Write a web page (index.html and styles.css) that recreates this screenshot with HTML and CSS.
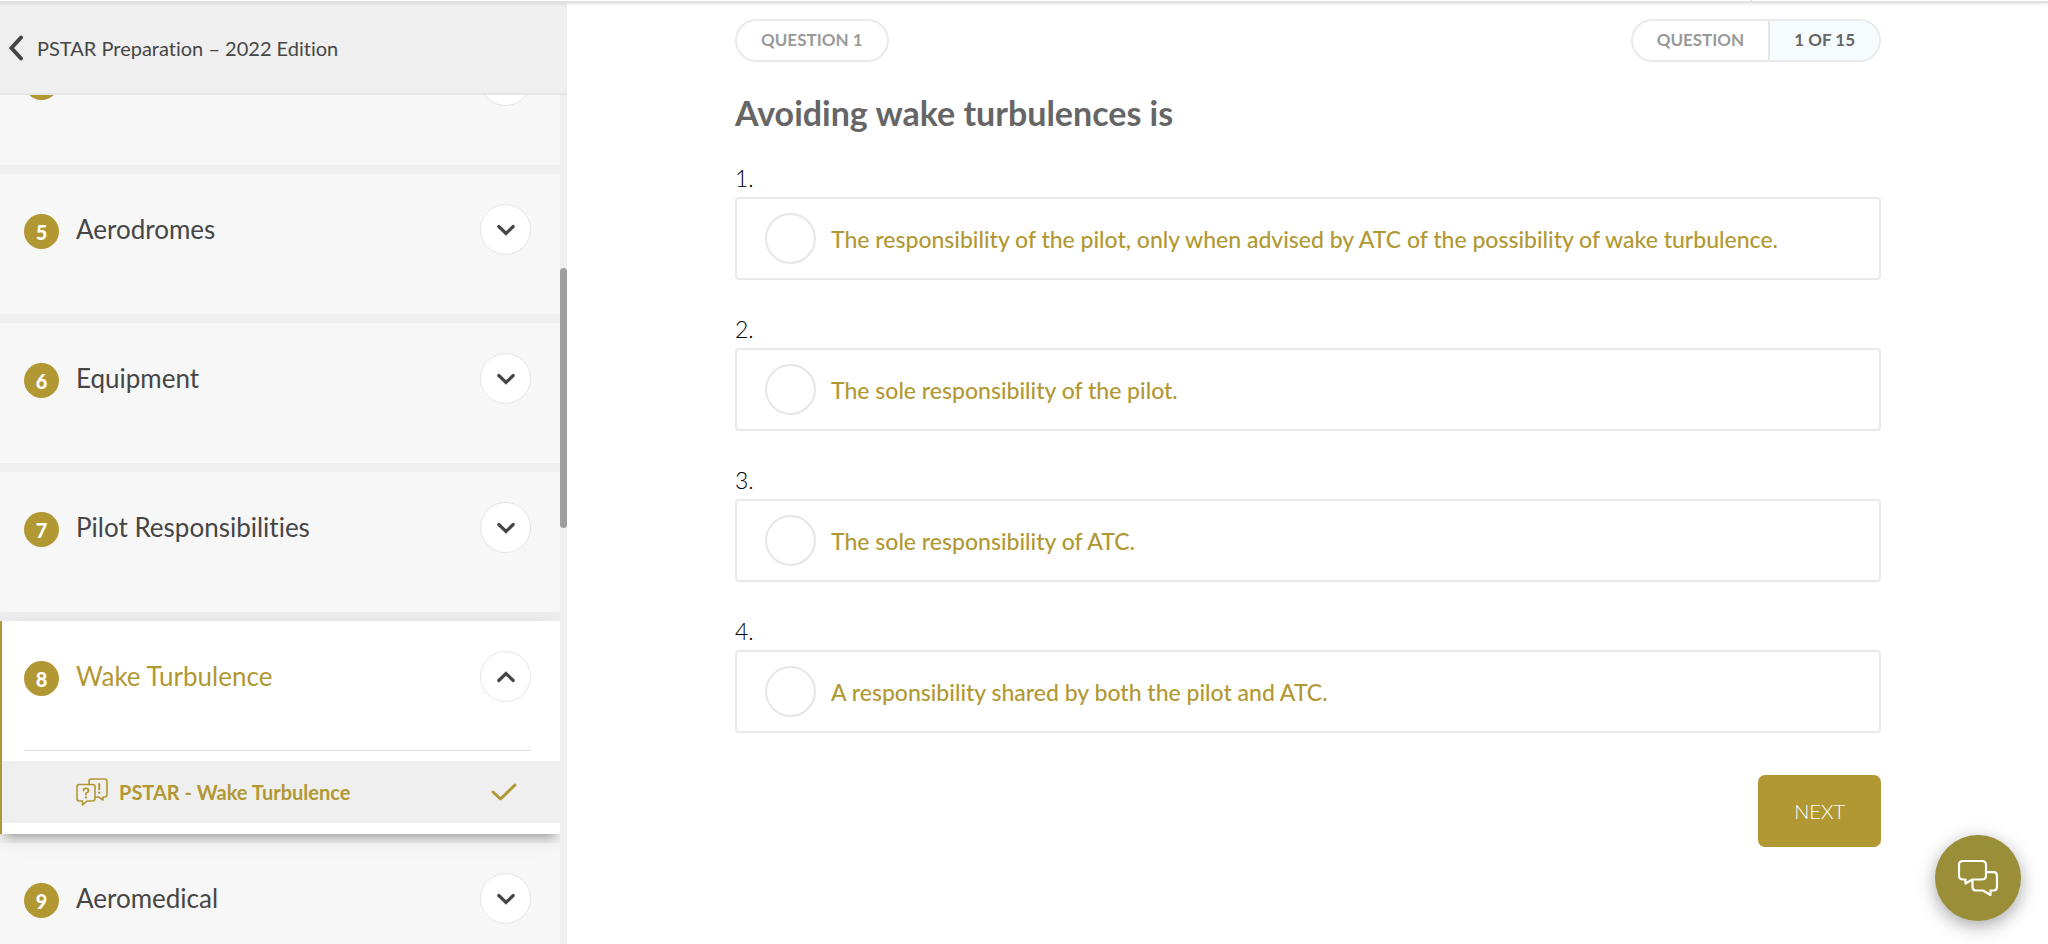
FILE: index.html
```html
<!DOCTYPE html>
<html lang="en">
<head>
<meta charset="utf-8">
<meta name="viewport" content="width=device-width, initial-scale=1">
<title>PSTAR Preparation – 2022 Edition</title>
<link rel="stylesheet" href="styles.css">
</head>
<body>
<svg class="sprite" aria-hidden="true">
  <symbol id="chevron" viewBox="0 0 20 14"><path d="M2.800 3.500 10 10.500 17.200 3.500" fill="none" stroke="currentColor" stroke-width="3.200" stroke-linecap="round"/></symbol>
</svg>
<header class="topbar"><span class="topbar-divider"></span></header>
<div class="layout">
  <aside class="sidebar">
    <a class="course" href="#">
      <svg class="course-back" viewBox="0 0 14 26" aria-hidden="true"><path d="M12 2.500 2.500 13 12 23.500" fill="none" stroke="currentColor" stroke-width="4" stroke-linecap="round"/></svg>
      <span>PSTAR Preparation – 2022 Edition</span>
    </a>
    <div class="viewport">
      <ul class="sections">
        <li class="section"><div class="section-head"><span class="badge"></span><span class="section-title"></span><button class="toggle" type="button" aria-label="Expand section 4"><svg class="chevron"><use href="#chevron"/></svg></button></div></li>
        <li class="section"><div class="section-head"><span class="badge">5</span><span class="section-title">Aerodromes</span><button class="toggle" type="button" aria-label="Expand Aerodromes"><svg class="chevron"><use href="#chevron"/></svg></button></div></li>
        <li class="section"><div class="section-head"><span class="badge">6</span><span class="section-title">Equipment</span><button class="toggle" type="button" aria-label="Expand Equipment"><svg class="chevron"><use href="#chevron"/></svg></button></div></li>
        <li class="section"><div class="section-head"><span class="badge">7</span><span class="section-title">Pilot Responsibilities</span><button class="toggle" type="button" aria-label="Expand Pilot Responsibilities"><svg class="chevron"><use href="#chevron"/></svg></button></div></li>
        <li class="section section-open">
          <div class="section-head"><span class="badge">8</span><span class="section-title">Wake Turbulence</span><button class="toggle" type="button" aria-label="Collapse Wake Turbulence"><svg class="chevron chevron-up"><use href="#chevron"/></svg></button></div>
          <a class="lesson" href="#">
            <svg class="lesson-icon" viewBox="0 0 32 28" fill="none" stroke="currentColor" stroke-width="1.600" stroke-linejoin="round" stroke-linecap="round" aria-hidden="true">
              <path d="M3.500 6.500H16.500Q19 6.500 19 9V20.500Q19 23 16.500 23H11L6.500 27V23H3.500Q1 23 1 20.500V9Q1 6.500 3.500 6.500Z"/>
              <path d="M13 6.500V3.500Q13 1 15.500 1H28.500Q31 1 31 3.500V16.500Q31 19 28.500 19H27V22L22.500 19H19"/>
              <path d="M7.500 12.500Q7.500 10.300 10 10.300T12.500 12.500Q12.500 14 10 15.300V16.500" stroke-width="1.800"/>
              <path d="M10 19.400V19.600M23.200 14.500V14.700" stroke-width="2.200"/>
              <path d="M23.200 6V11.300" stroke-width="2"/>
            </svg>
            <span class="lesson-title">PSTAR - Wake Turbulence</span>
            <svg class="lesson-check" viewBox="0 0 26 18" aria-hidden="true"><path d="M2 9 9.500 16 24 2" fill="none" stroke="currentColor" stroke-width="3" stroke-linecap="round" stroke-linejoin="round"/></svg>
          </a>
        </li>
        <li class="section"><div class="section-head"><span class="badge">9</span><span class="section-title">Aeromedical</span><button class="toggle" type="button" aria-label="Expand Aeromedical"><svg class="chevron"><use href="#chevron"/></svg></button></div></li>
      </ul>
      <span class="thumb"></span>
    </div>
  </aside>
  <main class="content">
    <div class="pills">
      <span class="pill"><span class="pill-part">QUESTION 1</span></span>
      <span class="pill"><span class="pill-part">QUESTION</span><span class="pill-part pill-count">1 OF 15</span></span>
    </div>
    <form class="quiz">
      <h1 class="question">Avoiding wake turbulences is</h1>
      <div class="options">
        <div class="option"><span class="option-number">1.</span><label class="answer"><input class="radio" type="radio" name="answer"><span>The responsibility of the pilot, only when advised by ATC of the possibility of wake turbulence.</span></label></div>
        <div class="option"><span class="option-number">2.</span><label class="answer"><input class="radio" type="radio" name="answer"><span>The sole responsibility of the pilot.</span></label></div>
        <div class="option"><span class="option-number">3.</span><label class="answer"><input class="radio" type="radio" name="answer"><span>The sole responsibility of ATC.</span></label></div>
        <div class="option"><span class="option-number">4.</span><label class="answer"><input class="radio" type="radio" name="answer"><span>A responsibility shared by both the pilot and ATC.</span></label></div>
      </div>
      <button class="next" type="button">NEXT</button>
    </form>
  </main>
</div>
<button class="chat" type="button" aria-label="Open chat">
  <svg class="chat-icon" viewBox="0 0 42 38" fill="none" stroke="currentColor" stroke-width="2.200" stroke-linejoin="round" aria-hidden="true">
    <path d="M15.500 20.500 8.500 24.500V20.500H6Q2 20.500 2 16.500V6Q2 2 6 2H25Q29 2 29 6V16.500Q29 20.500 25 20.500Z"/>
    <path d="M29 13.200H36.500Q40 13.200 40 16.700V28Q40 31.500 36.500 31.500H33.500V36L26 31.500H19Q15.500 31.500 15.500 28V20.500"/>
  </svg>
</button>
</body>
</html>
```

FILE: styles.css
```css
:root {
  --gold: #b19833;
  --ink: #464646;
  --line: #eaeaea;
  --panel: #efefef;
}

* { box-sizing: border-box; }

body {
  display: flex;
  flex-direction: column;
  height: 100vh;
  margin: 0;
  overflow: hidden;
  background: #fff;
  color: var(--ink);
  font-family: Lato, "Liberation Sans", sans-serif;
  font-variant-ligatures: none;
}

button {
  padding: 0;
  border: 0;
  font: inherit;
  cursor: pointer;
}

a { color: inherit; text-decoration: none; }

.sprite { position: absolute; width: 0; height: 0; }

.topbar {
  position: relative;
  z-index: 3;
  display: flex;
  flex: none;
  justify-content: flex-end;
  height: 3px;
  padding-right: 296px;
  background: #fff;
  border-bottom: 2px solid #e0e1e1;
  box-shadow: 0 1px 3px rgba(0, 0, 0, 0.1);
}

.topbar-divider { width: 1px; background: #ddd; }

.layout { display: flex; flex: 1; min-height: 0; }

/* Sidebar */
.sidebar {
  display: flex;
  flex: none;
  flex-direction: column;
  width: 567px;
  background: var(--panel);
}

.course {
  display: flex;
  flex: none;
  align-items: center;
  gap: 14px;
  height: 92px;
  padding: 0 9px;
  border-bottom: 2px solid #e6e6e6;
  font-size: 20px;
  line-height: 24px;
}

.course-back { width: 14px; height: 26px; }

.viewport {
  position: relative;
  flex: 1;
  min-height: 0;
  padding-right: 7px;
  overflow: hidden;
}

.sections {
  display: flex;
  flex-direction: column;
  gap: 9px;
  margin: -70px 0 0;
  padding: 0;
  list-style: none;
}

.section { background: #f7f7f7; }

.section-head {
  display: flex;
  align-items: flex-start;
  height: 140px;
  padding: 30px 29px 0 24px;
}

.badge {
  display: grid;
  place-items: center;
  width: 35px;
  height: 35px;
  margin-top: 10px;
  border-radius: 50%;
  background: var(--gold);
  color: #fff;
  font-size: 20px;
  font-weight: 900;
  line-height: 24px;
}

.section-title {
  flex: 1;
  margin: 9px 0 0 17px;
  font-size: 26px;
  line-height: 32px;
}

.toggle {
  display: grid;
  place-items: center;
  width: 51px;
  height: 51px;
  border: 1px solid #e5e5e5;
  border-radius: 50%;
  background: #fff;
  color: var(--ink);
}

.chevron { width: 20px; height: 14px; }
.chevron-up { transform: rotate(180deg); }

.section-open {
  position: relative;
  z-index: 1;
  padding-bottom: 11px;
  border-left: 2px solid var(--gold);
  background: #fff;
  box-shadow: 0 8px 10px -6px rgba(0, 0, 0, 0.35), 0 4px 24px rgba(0, 0, 0, 0.08);
  clip-path: inset(-9px 0 -40px 0);
}

.section-open .section-head {
  height: 130px;
  margin: 0 29px 10px 22px;
  padding: 30px 0 0;
  border-bottom: 1px solid #e0e0e0;
}

.section-open .section-title { color: var(--gold); }

.lesson {
  display: flex;
  align-items: center;
  gap: 11px;
  height: 62px;
  padding: 0 43px 0 74px;
  background: var(--panel);
  color: var(--gold);
  font-size: 20px;
  font-weight: 700;
  line-height: 24px;
}

.lesson-icon { width: 32px; height: 28px; }
.lesson-title { flex: 1; }
.lesson-check { width: 26px; height: 18px; }

.thumb {
  position: absolute;
  top: 173px;
  right: 0;
  width: 7px;
  height: 260px;
  border-radius: 4px;
  background: #9e9e9e;
}

/* Question */
.content { flex: 1; min-width: 0; padding: 16px 167px 0 168px; }

.pills { display: flex; justify-content: space-between; }

.pill {
  display: flex;
  height: 43px;
  border: 2px solid var(--line);
  border-radius: 22px;
  color: #999;
  font-size: 17px;
  font-weight: 700;
  line-height: 38px;
}

.pill-part { padding: 0 24px; }

.pill-count {
  border-left: 2px solid #e3e6e8;
  border-radius: 0 20px 20px 0;
  background: #f6fbfe;
  color: #666;
}

.quiz { display: flex; flex-direction: column; }

.question {
  margin: 31px 0;
  color: #666;
  font-size: 34px;
  font-weight: 700;
  line-height: 40px;
}

.options { display: flex; flex-direction: column; gap: 35px; }

.option { display: flex; flex-direction: column; gap: 5px; }

.option-number {
  color: #000;
  font-size: 23px;
  font-weight: 300;
  line-height: 28px;
}

.answer {
  display: flex;
  align-items: center;
  gap: 15px;
  min-height: 83px;
  padding: 0 28px;
  border: 2px solid var(--line);
  border-radius: 4px;
  color: var(--gold);
  font-size: 23px;
  font-weight: 500;
  line-height: 28px;
}

.radio {
  flex: none;
  width: 51px;
  height: 51px;
  margin: 0;
  appearance: none;
  border: 2px solid #e6e6e6;
  border-radius: 50%;
  background: #fff;
}

.next {
  align-self: flex-end;
  margin-top: 42px;
  padding: 24px 36px;
  border-radius: 7px;
  background: var(--gold);
  color: #fff;
  font-size: 20px;
  font-weight: 300;
  line-height: 24px;
}

.chat {
  position: fixed;
  right: 27px;
  bottom: 23px;
  display: grid;
  place-items: center;
  width: 86px;
  height: 86px;
  border-radius: 50%;
  background: #9b8e38;
  box-shadow: 0 5px 18px rgba(0, 0, 0, 0.35);
  color: #fff;
}

.chat-icon { width: 42px; height: 38px; }
```
